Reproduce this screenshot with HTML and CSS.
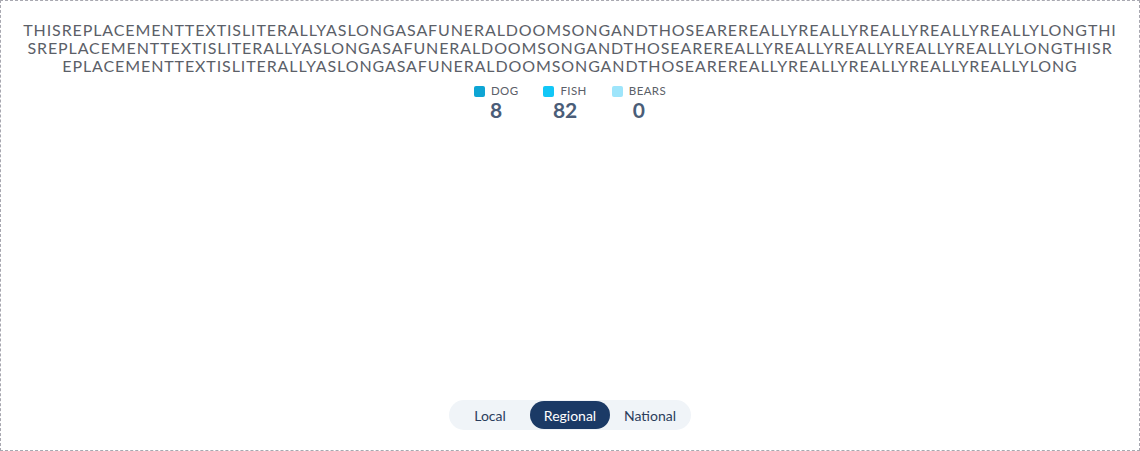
FILE: index.html
```html
<!DOCTYPE html>
<html lang="en">
<head>
<meta charset="utf-8">
<title>Chart</title>
<link rel="stylesheet" href="styles.css">
</head>
<body>
<div class="frame">
  <h1 class="title">THISREPLACEMENTTEXTISLITERALLYASLONGASAFUNERALDOOMSONGANDTHOSEAREREALLYREALLYREALLYREALLYREALLYLONGTHISREPLACEMENTTEXTISLITERALLYASLONGASAFUNERALDOOMSONGANDTHOSEAREREALLYREALLYREALLYREALLYREALLYLONGTHISREPLACEMENTTEXTISLITERALLYASLONGASAFUNERALDOOMSONGANDTHOSEAREREALLYREALLYREALLYREALLYREALLYLONG</h1>
  <div class="legend">
    <div class="item">
      <div class="label"><span class="swatch dog"></span>DOG</div>
      <div class="value">8</div>
    </div>
    <div class="item">
      <div class="label"><span class="swatch fish"></span>FISH</div>
      <div class="value">82</div>
    </div>
    <div class="item">
      <div class="label"><span class="swatch bears"></span>BEARS</div>
      <div class="value">0</div>
    </div>
  </div>
  <div class="spacer"></div>
  <div class="toggle">
    <button class="opt">Local</button>
    <button class="opt active">Regional</button>
    <button class="opt">National</button>
  </div>
</div>
</body>
</html>
```
FILE: styles.css
```css
html, body {
  margin: 0;
  padding: 0;
  background: #ffffff;
}
body {
  font-family: Lato, "Open Sans", sans-serif;
}
.frame {
  box-sizing: border-box;
  width: 1140px;
  height: 451px;
  border: 1px dashed #a8a8b0;
  display: flex;
  flex-direction: column;
  align-items: center;
  padding: 20px 22px 20px;
}
.title {
  margin: 0;
  width: 100%;
  font-size: 16px;
  line-height: 18px;
  font-weight: 400;
  letter-spacing: 0.9px;
  color: #5b6068;
  text-align: center;
  word-break: break-all;
}
.legend {
  display: flex;
  gap: 25px;
  margin-top: 9px;
}
.item {
  display: flex;
  flex-direction: column;
  align-items: center;
}
.label {
  display: flex;
  align-items: center;
  gap: 6px;
  font-size: 11.5px;
  line-height: 14px;
  color: #5b6068;
  letter-spacing: 0.4px;
}
.swatch {
  width: 11px;
  height: 11px;
  border-radius: 2px;
  display: inline-block;
}
.dog { background: #0ea5d4; }
.fish { background: #12c7f7; }
.bears { background: #9ee5fb; }
.value {
  font-size: 21px;
  line-height: 24px;
  font-weight: 700;
  color: #4a5d78;
}
.spacer { flex: 1; }
.toggle {
  display: flex;
  background: #f0f4f8;
  border-radius: 15px;
  padding: 1px 1px;
}
.opt {
  width: 80px;
  height: 28px;
  border: 0;
  border-radius: 14px;
  background: transparent;
  font-family: Lato, "Open Sans", sans-serif;
  font-size: 14px;
  color: #2b3d5c;
  padding: 0;
}
.opt.active {
  background: #1b3a66;
  color: #ffffff;
}
```
